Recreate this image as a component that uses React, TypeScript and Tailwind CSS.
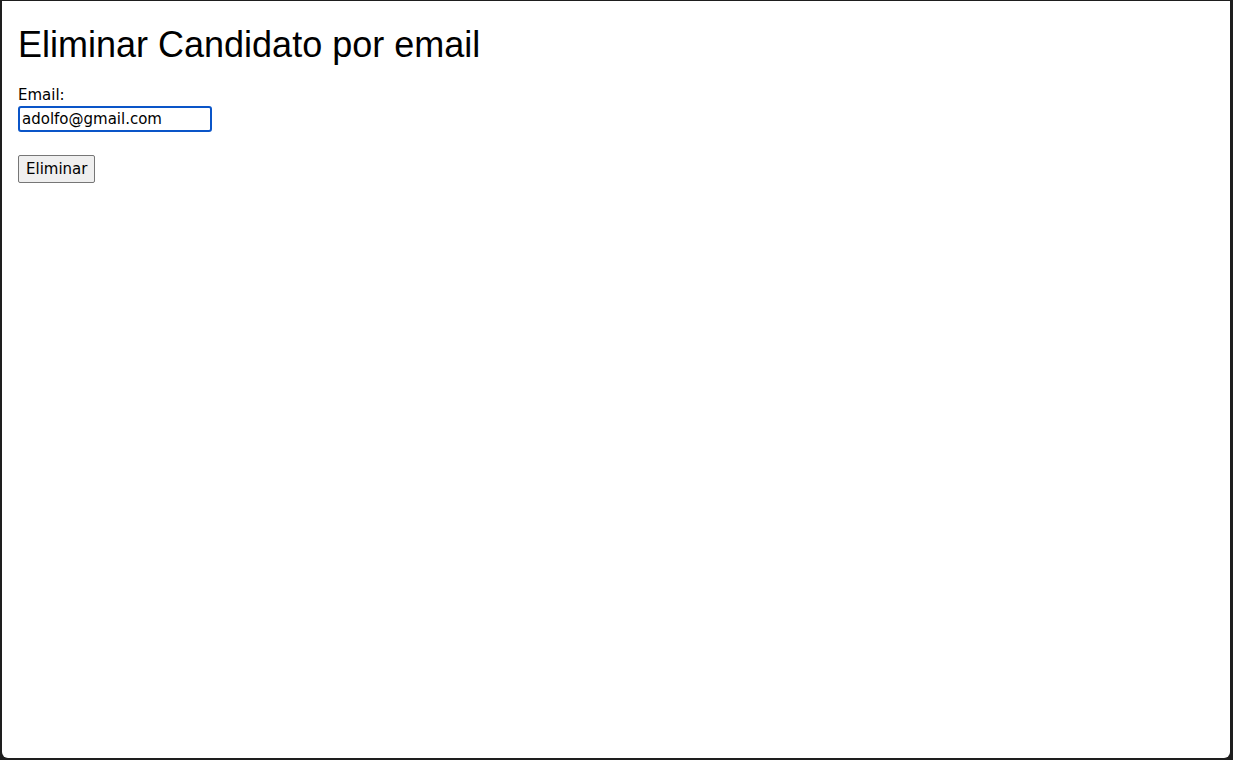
export default function App() {
  return (
    <div className="h-[760px] w-[1233px] bg-[#1e1e1e] pl-[2px] pr-[3px] pt-[1px] pb-[2px]">
      <div className="flex h-full flex-col items-start rounded-b-[6px] bg-white px-4 pt-[23px]">
        <h1 className="text-[36px] leading-[41px] text-black font-['Liberation_Sans',Arial,sans-serif]">
          Eliminar Candidato por email
        </h1>
        <form className="mt-[21px] flex flex-col items-start font-['DejaVu_Sans',sans-serif] text-[15px] text-black">
          <label htmlFor="email" className="leading-[18px]">Email:</label>
          <input
            id="email"
            type="email"
            defaultValue="adolfo@gmail.com"
            className="mt-[2px] h-[26px] w-[194px] rounded-[3px] border-2 border-[#0a55c8] px-[2px] text-[15px] leading-[18px] text-black outline-none"
          />
          <button
            type="button"
            className="mt-[23px] h-[28px] rounded-[2px] border border-[#767676] bg-[#efefef] px-[7px] text-[15px] leading-[18px] text-black"
          >
            Eliminar
          </button>
        </form>
      </div>
    </div>
  );
}
